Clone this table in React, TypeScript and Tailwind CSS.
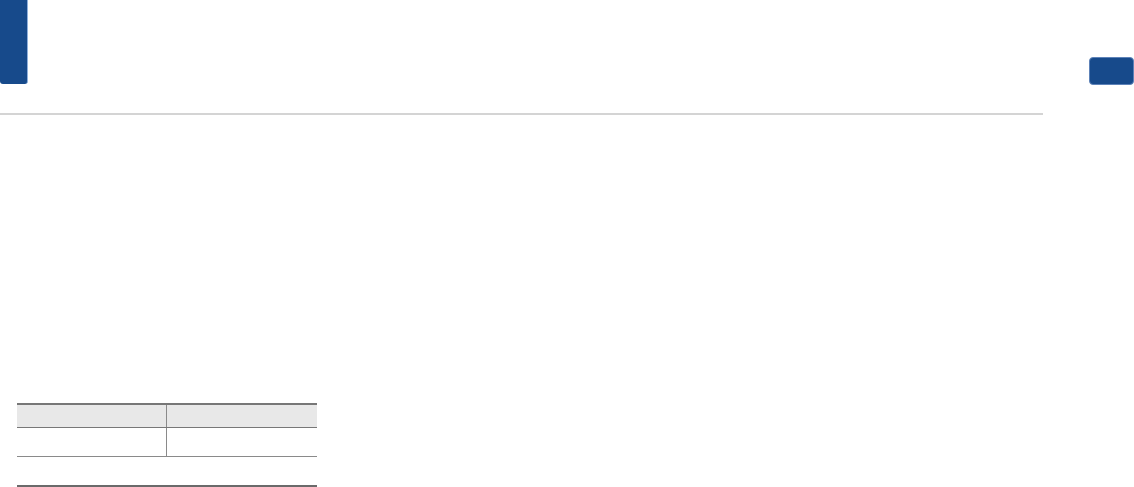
import React from 'react';

export default function App() {
  return (
    <div className="w-[1134px] h-[487px] bg-white overflow-hidden flex flex-col" style={{ fontFamily: "'Noto Sans', sans-serif" }}>
      <div className="flex justify-between h-[113px] shrink-0">
        <div className="w-[28px] h-[84px] bg-[#174a8b] rounded-b-[3px] border-r border-[#8fb0dc]" />
        <div className="mt-[57px] w-[45px] h-[28px] bg-[#174a8b] rounded-[4px] border border-[#5d82b8]" />
      </div>
      <div className="w-[1043px] h-[2px] bg-[#d4d4d4] shrink-0" />

      <div className="ml-[17px] mt-[288px] w-[300px]">
        <div className="grid grid-cols-[150px_1fr] border-t-2 border-b border-[#777777] bg-[#e8e8e8] h-[25px]">
          <div className="border-r border-[#8a8a8a]" />
          <div />
        </div>
        <div className="grid grid-cols-[150px_1fr] border-b border-[#8a8a8a] h-[29px]">
          <div className="border-r border-[#8a8a8a]" />
          <div />
        </div>
        <div className="h-[28px]" />
        <div className="h-[2px] bg-[#6a6a6a]" />
      </div>
    </div>
  );
}
